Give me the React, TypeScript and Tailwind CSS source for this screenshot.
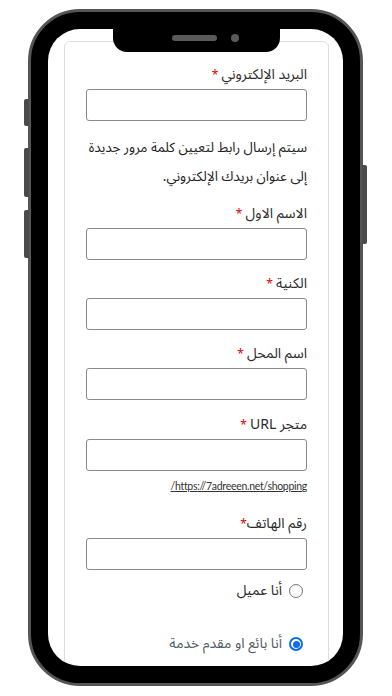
import React from 'react'

const arabic = "font-['Noto_Sans_Arabic','Noto_Sans','DejaVu_Sans',sans-serif]"

function Field({ label, star = ' *', className = '' }: { label: string; star?: string; className?: string }) {
  return (
    <div className={className}>
      <div className="h-[20px] text-[14px] leading-[20px] text-[#2b2b2b]">
        {label}
        <span className="text-[12px] text-[#e00000]">{star}</span>
      </div>
      <div className="mt-[4px] h-[32px] rounded-[3px] border border-[#8a8a8a] bg-white" />
    </div>
  )
}

function Radio({ label, checked, className = '' }: { label: string; checked?: boolean; className?: string }) {
  return (
    <div className={`flex h-[20px] items-center gap-[7px] pr-[4px] ${className}`}>
      {checked ? (
        <span className="flex h-[14px] w-[14px] items-center justify-center rounded-full border-[2px] border-[#0b6cf0] bg-white">
          <span className="h-[7px] w-[7px] rounded-full bg-[#0b6cf0]" />
        </span>
      ) : (
        <span className="h-[14px] w-[14px] rounded-full border border-[#767676] bg-white" />
      )}
      <span className={`text-[14px] leading-[20px] ${checked ? 'text-[#4f5d66]' : 'text-[#2b2b2b]'}`}>{label}</span>
    </div>
  )
}

export default function App() {
  return (
    <div className="min-h-[696px] w-[392px] bg-white pt-[9px]">
      <div className="relative ml-[28px] h-[677px] w-[335px] rounded-[52px] border-[3px] border-[#555] bg-black p-[17px]">
        {/* side buttons */}
        <div className="absolute left-[-7px] top-[87px] h-[27px] w-[5px] rounded-l-[2px] bg-[#4a4a4a]" />
        <div className="absolute left-[-7px] top-[136px] h-[49px] w-[5px] rounded-l-[2px] bg-[#4a4a4a]" />
        <div className="absolute left-[-7px] top-[198px] h-[48px] w-[5px] rounded-l-[2px] bg-[#4a4a4a]" />
        <div className="absolute right-[-7px] top-[153px] h-[79px] w-[5px] rounded-r-[2px] bg-[#4a4a4a]" />

        <div className="relative h-full overflow-hidden rounded-[32px] bg-white">
          <div className="absolute left-[65px] top-0 z-10 flex h-[23px] w-[167px] items-start gap-[14px] rounded-b-[14px] bg-black pl-[59px] pt-[6px]">
            <span className="h-[6px] w-[45px] rounded-full bg-[#5a5a5a]" />
            <span className="mt-[-1px] h-[8px] w-[8px] rounded-full bg-[#5a5a5a]" />
          </div>

          <div dir="rtl" className={`ml-[16px] mr-[14px] mt-[12px] h-[700px] rounded-t-[6px] border border-[#dcdcdc] px-[21px] pt-[23px] ${arabic}`}>
            <Field label="البريد الإلكتروني" />
            <p className="mt-[12px] whitespace-nowrap text-[13.5px] leading-[29px] text-[#222]">
              سيتم إرسال رابط لتعيين كلمة مرور جديدة
              <br />
              إلى عنوان بريدك الإلكتروني.
            </p>
            <Field label="الاسم الاول" className="mt-[13px]" />
            <Field label="الكنية" className="mt-[14px]" />
            <Field label="اسم المحل" className="mt-[14px]" />
            <Field label="متجر URL" className="mt-[15px]" />
            <div className="mt-[8px] h-[14px] font-['Lato',sans-serif] text-[10.5px] leading-[14px] tracking-[-0.3px] text-[#333] underline">
              https://7adreeen.net/shopping/
            </div>
            <Field label="رقم الهاتف" star="*" className="mt-[21px]" />
            <Radio label="أنا عميل" className="mt-[11px]" />
            <Radio label="أنا بائع او مقدم خدمة" checked className="mt-[33px]" />
          </div>
        </div>
      </div>
    </div>
  )
}
